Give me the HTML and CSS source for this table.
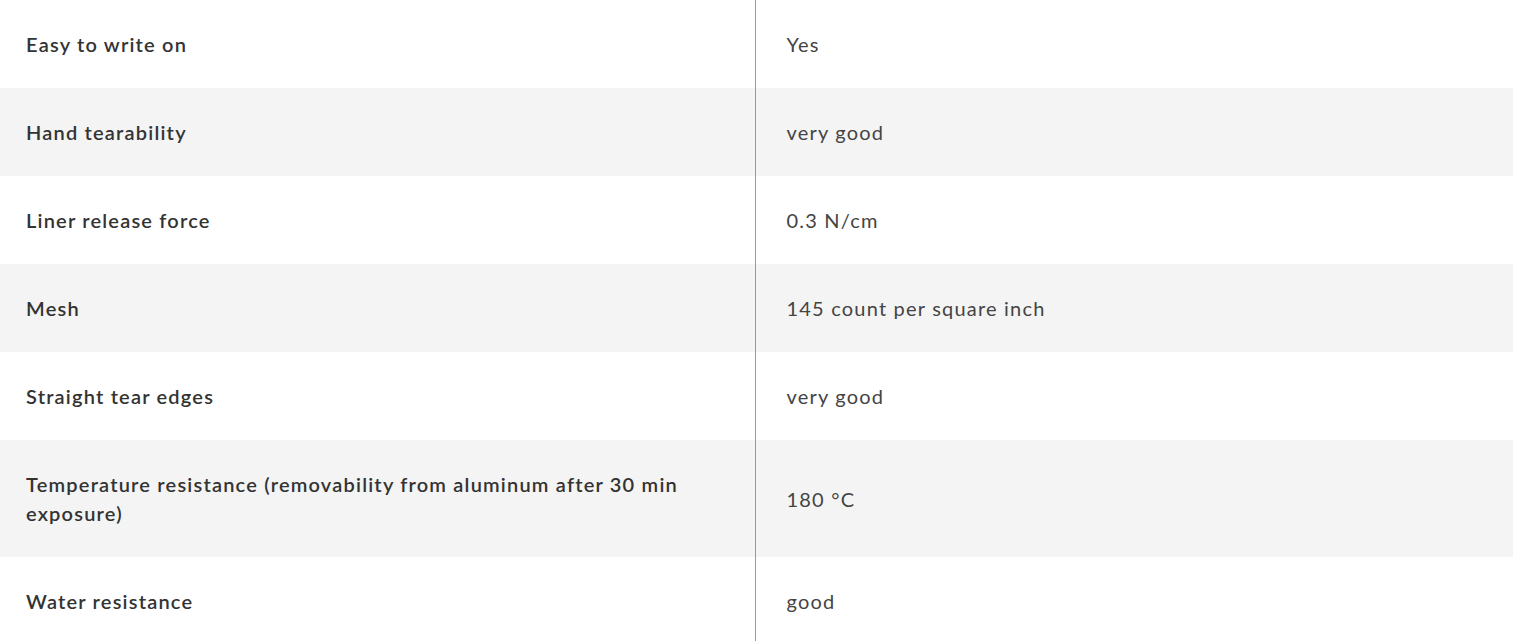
FILE: index.html
```html
<!DOCTYPE html>
<html lang="en">
<head>
<meta charset="utf-8">
<title>Specifications</title>
<link rel="stylesheet" href="styles.css">
</head>
<body>
<table class="spec-table">
  <tbody>
    <tr class="row"><th class="label">Easy to write on</th><td class="value">Yes</td></tr>
    <tr class="row alt"><th class="label">Hand tearability</th><td class="value">very good</td></tr>
    <tr class="row"><th class="label">Liner release force</th><td class="value">0.3 N/cm</td></tr>
    <tr class="row alt"><th class="label">Mesh</th><td class="value">145 count per square inch</td></tr>
    <tr class="row"><th class="label">Straight tear edges</th><td class="value">very good</td></tr>
    <tr class="row alt"><th class="label">Temperature resistance (removability from aluminum after 30 min exposure)</th><td class="value">180 °C</td></tr>
    <tr class="row"><th class="label">Water resistance</th><td class="value">good</td></tr>
  </tbody>
</table>
</body>
</html>
```

FILE: styles.css
```css
html, body {
  margin: 0;
  padding: 0;
  background: #ffffff;
}
body {
  font-family: Lato, "Open Sans", Arial, sans-serif;
  color: #333333;
}
.spec-table {
  width: 1513px;
  border-collapse: collapse;
  table-layout: fixed;
}
.row {
  background: #ffffff;
}
.row.alt {
  background: #f4f4f4;
}
.label {
  width: 755px;
  box-sizing: border-box;
  text-align: left;
  font-weight: 600;
  font-size: 20px;
  letter-spacing: 1.2px;
  line-height: 29px;
  padding: 30px 60px 29px 26px;
  color: #333333;
  border-right: 1px solid #9a9a9a;
  vertical-align: middle;
}
.value {
  font-weight: 400;
  font-size: 20px;
  letter-spacing: 1.2px;
  line-height: 29px;
  padding: 30px 30px 29px 31px;
  color: #444444;
  vertical-align: middle;
}
```
